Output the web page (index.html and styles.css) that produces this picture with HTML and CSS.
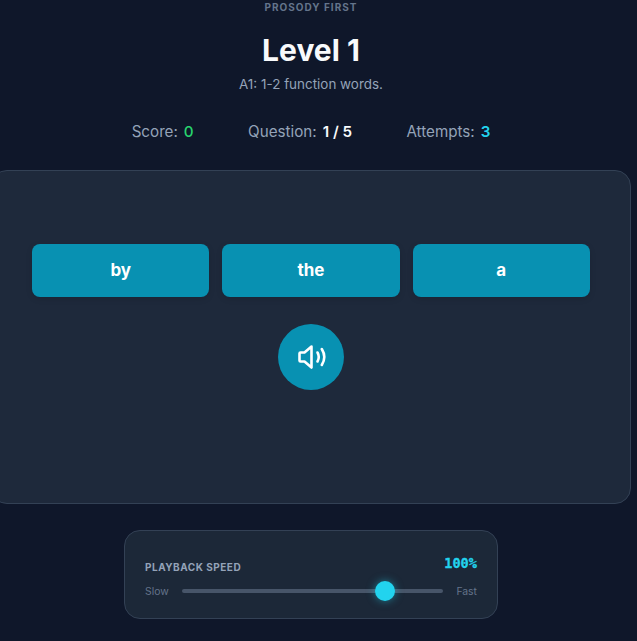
FILE: index.html
```html
<!DOCTYPE html>
<html lang="en">
<head>
<meta charset="utf-8">
<title>Prosody First</title>
<link rel="stylesheet" href="styles.css">
</head>
<body>
<main class="page">
  <header class="head">
    <p class="eyebrow">PROSODY FIRST</p>
    <h1 class="title">Level 1</h1>
    <p class="subtitle">A1: 1-2 function words.</p>
  </header>
  <div class="stats">
    <div class="stat"><span>Score:</span><b class="green">0</b></div>
    <div class="stat"><span>Question:</span><b class="white">1 / 5</b></div>
    <div class="stat"><span>Attempts:</span><b class="cyan">3</b></div>
  </div>
  <section class="card">
    <div class="options">
      <button class="option">by</button>
      <button class="option">the</button>
      <button class="option">a</button>
    </div>
    <button class="play" aria-label="Play">
      <svg width="32" height="32" viewBox="0 0 32 32" fill="none" stroke="currentColor" stroke-width="2.6" stroke-linecap="round" stroke-linejoin="round">
        <path d="M16.5 5.5 9.5 11.5H5.5a1 1 0 0 0-1 1v7a1 1 0 0 0 1 1h4l7 6z"/>
        <path d="M22.5 11.5q2.5 4.5 0 9"/>
        <path d="M26.8 8q5 8 0 16"/>
      </svg>
    </button>
  </section>
  <section class="speed">
    <div class="speed-top">
      <span class="speed-label">PLAYBACK SPEED</span>
      <span class="speed-value">100%</span>
    </div>
    <div class="speed-row">
      <span class="speed-end">Slow</span>
      <input class="slider" type="range" min="20" max="120" value="100" aria-label="Playback speed">
      <span class="speed-end">Fast</span>
    </div>
  </section>
</main>
</body>
</html>
```
FILE: styles.css
```css
* { box-sizing: border-box; }
html, body { margin: 0; height: 100%; overflow: hidden; }
body {
  background: #0f172a;
  font-family: Inter, "Liberation Sans", sans-serif;
  color: #f8fafc;
}
.page {
  width: 622px;
  height: 641px;
  display: flex;
  flex-direction: column;
  align-items: center;
}
.head { text-align: center; }
.eyebrow {
  margin: 0;
  padding-top: 1px;
  font-size: 10px;
  line-height: 12px;
  font-weight: 700;
  letter-spacing: 1px;
  color: #64748b;
}
.title {
  margin: 18px 0 0;
  font-size: 30px;
  line-height: 38px;
  font-weight: 700;
  color: #f8fafc;
}
.subtitle {
  margin: 6px 0 0;
  font-size: 13.44px;
  line-height: 18px;
  color: #94a3b8;
}
.stats {
  display: flex;
  gap: 54.4px;
  margin-top: 29px;
  font-size: 15.2px;
  line-height: 20px;
  color: #94a3b8;
}
.stat { display: flex; gap: 6px; }
.stat b { font-weight: 600; }
.stat .green { color: #28d46e; font-weight: 500; }
.white { color: #f8fafc; }
.cyan { color: #22d3ee; }
.card {
  flex: none;
  width: 640px;
  height: 334px;
  margin-top: 28px;
  padding: 73px 40px 0;
  background: #1e293b;
  border: 1px solid #334155;
  border-radius: 16px;
  display: flex;
  flex-direction: column;
  align-items: center;
  gap: 27px;
}
.options {
  width: 100%;
  display: grid;
  grid-template-columns: repeat(3, 1fr);
  gap: 12.8px;
}
.option {
  height: 53px;
  padding-bottom: 2px;
  border: 0;
  border-radius: 8px;
  background: #0891b2;
  color: #fff;
  font: 700 17px Inter, "Liberation Sans", sans-serif;
  box-shadow: 0 2px 6px rgba(0, 0, 0, .12);
}
.play {
  width: 66px;
  height: 66px;
  border: 0;
  border-radius: 50%;
  background: #0891b2;
  color: #fff;
  display: flex;
  align-items: center;
  justify-content: center;
  padding: 0;
}
.speed {
  width: 374px;
  height: 89px;
  margin-top: 26px;
  padding: 24px 20px 0;
  background: #1c2838;
  border: 1px solid #334155;
  border-radius: 16px;
}
.speed-top {
  display: flex;
  justify-content: space-between;
  align-items: flex-start;
  height: 26px;
}
.speed-label {
  margin-top: 6px;
  font-size: 10px;
  line-height: 12px;
  font-weight: 700;
  letter-spacing: .5px;
  color: #94a3b8;
}
.speed-value {
  font-family: "DejaVu Sans Mono", monospace;
  font-size: 13.6px;
  line-height: 17px;
  font-weight: 700;
  -webkit-text-stroke: .3px #22d3ee;
  color: #22d3ee;
}
.speed-row {
  display: flex;
  align-items: center;
  gap: 13px;
  height: 20px;
}
.speed-end { font-size: 10.4px; color: #64748b; }
.slider {
  flex: 1;
  min-width: 0;
  height: 20px;
  margin: 0;
  background: transparent;
  -webkit-appearance: none;
  appearance: none;
}
.slider::-webkit-slider-runnable-track {
  height: 4px;
  border-radius: 2px;
  background: #475569;
}
.slider::-webkit-slider-thumb {
  -webkit-appearance: none;
  width: 20px;
  height: 20px;
  margin-top: -8px;
  border-radius: 50%;
  background: #22d3ee;
  box-shadow: 0 0 8px rgba(34, 211, 238, .5);
}
```
